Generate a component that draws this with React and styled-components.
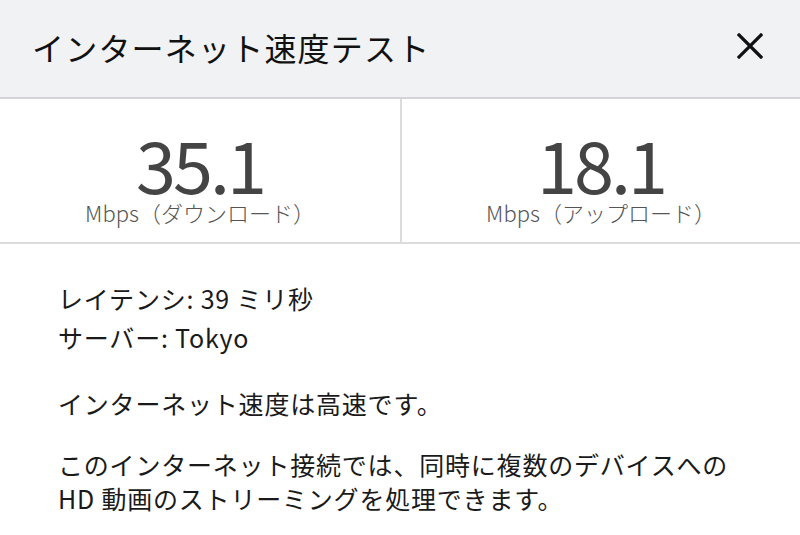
import React from "react";
import styled, { createGlobalStyle } from "styled-components";

const Global = createGlobalStyle`
  html, body { margin: 0; padding: 0; background: #ffffff; }
  body {
    font-family: "Noto Sans CJK JP", "Noto Sans", sans-serif;
    width: 800px;
    height: 535px;
    overflow: hidden;
  }
`;

const Page = styled.div`
  width: 800px;
  height: 535px;
  display: flex;
  flex-direction: column;
  background: #fff;
`;

const Header = styled.header`
  height: 99px;
  flex: 0 0 99px;
  background: #f1f2f4;
  border-bottom: 2px solid #d4d4d6;
  display: flex;
  align-items: center;
  justify-content: space-between;
  padding: 0 36px 0 32px;
  box-sizing: border-box;
`;

const Title = styled.h1`
  margin: -4px 0 0;
  font-size: 32px;
  font-weight: 400;
  color: #111;
  letter-spacing: 1.2px;
`;

const CloseButton = styled.button`
  border: none;
  background: transparent;
  padding: 0;
  width: 28px;
  height: 28px;
  display: flex;
  align-items: center;
  justify-content: center;
  margin-top: -6px;
  cursor: pointer;
`;

const Stats = styled.section`
  display: grid;
  grid-template-columns: 1fr 1fr;
  height: 145px;
  flex: 0 0 145px;
  border-bottom: 2px solid #dcdcdc;
  box-sizing: border-box;
`;

const Stat = styled.div`
  display: flex;
  flex-direction: column;
  align-items: center;
  justify-content: center;
  border-left: ${(p) => (p.$divider ? "2px solid #dcdcdc" : "none")};
  padding-top: 14px;
`;

const Value = styled.div`
  font-size: 72px;
  line-height: 66px;
  color: #444;
  font-weight: 400;
  letter-spacing: -3px;
`;

const Unit = styled.div`
  font-size: 22px;
  line-height: 28px;
  margin-top: 2px;
  color: #555;
  font-weight: 300;
`;

const Body = styled.section`
  padding: 35px 58px 0;
  color: #1a1a1a;
  font-size: 25px;
  letter-spacing: 0.8px;
`;

const Info = styled.div`
  line-height: 39px;
`;

const Para = styled.p`
  margin: ${(p) => p.$mt || "0"} 0 0;
  line-height: 34px;
`;

export default function App() {
  return (
    <Page>
      <Global />
      <Header>
        <Title>インターネット速度テスト</Title>
        <CloseButton aria-label="閉じる">
          <svg width="26" height="26" viewBox="0 0 26 26">
            <path d="M2 2 L24 24 M24 2 L2 24" stroke="#111" strokeWidth="3.2" strokeLinecap="square" />
          </svg>
        </CloseButton>
      </Header>
      <Stats>
        <Stat>
          <Value>35.1</Value>
          <Unit>Mbps（ダウンロード）</Unit>
        </Stat>
        <Stat $divider>
          <Value>18.1</Value>
          <Unit>Mbps（アップロード）</Unit>
        </Stat>
      </Stats>
      <Body>
        <Info>レイテンシ: 39 ミリ秒</Info>
        <Info>サーバー: Tokyo</Info>
        <Para $mt="29px">インターネット速度は高速です。</Para>
        <Para $mt="27px">
          このインターネット接続では、同時に複数のデバイスへの
          <br />
          HD 動画のストリーミングを処理できます。
        </Para>
      </Body>
    </Page>
  );
}
